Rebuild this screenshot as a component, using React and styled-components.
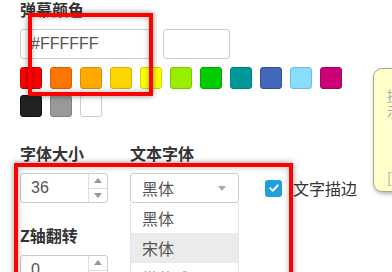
import styled, { createGlobalStyle } from "styled-components";

const Global = createGlobalStyle`
  body {
    margin: 0;
    background: #fff;
  }
`;

const colors = [
  ["#ff0000", "#cc0000"],
  ["#ff7700", "#d96000"],
  ["#ffaa00", "#d99000"],
  ["#ffd500", "#d9b400"],
  ["#ffff00", "#d6d600"],
  ["#99ee00", "#7fc600"],
  ["#00cc00", "#00a800"],
  ["#009999", "#007f7f"],
  ["#4466bb", "#35529c"],
  ["#88ddff", "#6cc0e6"],
  ["#cc0077", "#a80062"],
  ["#222222", "#111111"],
  ["#999999", "#808080"],
  ["#ffffff", "#cccccc"],
];

export default function App() {
  return (
    <Page>
      <Global />
      <Title>弹幕颜色</Title>
      <InputRow>
        <TextInput $width={130} defaultValue="#FFFFFF" />
        <TextInput $width={67} />
      </InputRow>
      <Swatches>
        {colors.map(([fill, edge]) => (
          <Swatch key={fill} $fill={fill} $edge={edge} />
        ))}
      </Swatches>

      <Settings>
        <Column $width={110}>
          <Label>字体大小</Label>
          <NumberBox value="36" />
          <Label $top={23}>Z轴翻转</Label>
          <NumberBox value="0" />
        </Column>
        <Column $width={135}>
          <Label>文本字体</Label>
          <SelectWrap>
            <Select>
              黑体
              <Caret />
            </Select>
            <Options>
              <Option>黑体</Option>
              <Option $active>宋体</Option>
              <Option>微软雅黑</Option>
            </Options>
          </SelectWrap>
        </Column>
        <Column>
          <CheckRow>
            <Check>
              <svg width="12" height="12" viewBox="0 0 12 12">
                <path
                  d="M2.2 6.3 L4.8 8.7 L9.8 3.4"
                  fill="none"
                  stroke="#fff"
                  strokeWidth="2"
                  strokeLinecap="round"
                  strokeLinejoin="round"
                />
              </svg>
            </Check>
            文字描边
          </CheckRow>
        </Column>
      </Settings>

      <Note>
        <NoteLine>提</NoteLine>
        <NoteLine>示</NoteLine>
        <NoteLine $top={50}>[</NoteLine>
      </Note>
      <Mark $left={28} $top={13} $width={125} $height={83} />
      <Mark $left={14} $top={163} $width={279} $height={130} />
    </Page>
  );
}

function NumberBox({ value }) {
  return (
    <Spin>
      <SpinValue>{value}</SpinValue>
      <SpinButtons>
        <SpinArrow $up />
        <SpinArrow />
      </SpinButtons>
    </Spin>
  );
}

const Page = styled.div`
  position: relative;
  width: 392px;
  height: 272px;
  overflow: hidden;
  box-sizing: border-box;
  padding-left: 20px;
  font-family: "Noto Sans CJK SC", sans-serif;
  color: #333;
`;

const Title = styled.div`
  font-size: 16px;
  font-weight: bold;
  line-height: 18px;
`;

const InputRow = styled.div`
  display: flex;
  gap: 13px;
  margin-top: 11px;
`;

const TextInput = styled.input`
  width: ${({ $width }) => $width}px;
  height: 30px;
  box-sizing: border-box;
  border: 1px solid #ccc;
  border-radius: 3px;
  padding: 0 10px;
  font-family: "Liberation Sans", sans-serif;
  font-size: 16px;
  color: #555;
  outline: none;
`;

const Swatches = styled.div`
  display: flex;
  flex-wrap: wrap;
  gap: 6px 8px;
  width: 330px;
  margin-top: 8px;
`;

const Swatch = styled.div`
  width: 22px;
  height: 22px;
  box-sizing: border-box;
  border-radius: 3px;
  background: ${({ $fill }) => $fill};
  border: 1px solid ${({ $edge }) => $edge};
`;

const Settings = styled.div`
  display: flex;
  margin-top: 27px;
`;

const Column = styled.div`
  display: flex;
  flex-direction: column;
  width: ${({ $width }) => ($width ? `${$width}px` : "auto")};
`;

const Label = styled.div`
  font-size: 16px;
  font-weight: bold;
  line-height: 18px;
  margin-top: ${({ $top }) => $top || 0}px;
  margin-bottom: 11px;
`;

const Spin = styled.div`
  display: flex;
  width: 88px;
  height: 30px;
  box-sizing: border-box;
  border: 1px solid #ccc;
  border-radius: 3px;
`;

const SpinValue = styled.div`
  flex: 1;
  padding-left: 10px;
  font-family: "Liberation Sans", sans-serif;
  font-size: 16px;
  line-height: 28px;
  color: #555;
`;

const SpinButtons = styled.div`
  width: 18px;
  display: flex;
  flex-direction: column;
  border-left: 1px solid #ddd;
`;

const SpinArrow = styled.div`
  flex: 1;
  display: flex;
  align-items: center;
  justify-content: center;
  & + & {
    border-top: 1px solid #ddd;
  }
  &::before {
    content: "";
    border-left: 4px solid transparent;
    border-right: 4px solid transparent;
    ${({ $up }) =>
      $up ? "border-bottom: 5px solid #999;" : "border-top: 5px solid #999;"}
  }
`;

const SelectWrap = styled.div`
  position: relative;
  width: 109px;
`;

const Select = styled.div`
  display: flex;
  align-items: center;
  height: 30px;
  box-sizing: border-box;
  border: 1px solid #ccc;
  border-radius: 3px;
  padding-left: 11px;
  font-size: 16px;
  color: #555;
`;

const Caret = styled.span`
  margin-left: auto;
  margin-right: 12px;
  border-left: 4px solid transparent;
  border-right: 4px solid transparent;
  border-top: 5px solid #aaa;
`;

const Options = styled.div`
  position: absolute;
  top: 30px;
  left: 0;
  right: 0;
  background: #fff;
  border-left: 1px solid #e4e4e4;
  border-right: 1px solid #e4e4e4;
`;

const Option = styled.div`
  height: 30px;
  padding-left: 11px;
  font-size: 16px;
  line-height: 30px;
  color: #555;
  background: ${({ $active }) => ($active ? "#ebebeb" : "#fff")};
`;

const CheckRow = styled.div`
  display: flex;
  align-items: center;
  gap: 11px;
  height: 30px;
  margin-top: 29px;
  font-size: 16px;
  color: #333;
`;

const Check = styled.span`
  display: flex;
  align-items: center;
  justify-content: center;
  width: 17px;
  height: 17px;
  border-radius: 3px;
  background: #1fa0dd;
`;

const Note = styled.div`
  position: absolute;
  left: 373px;
  top: 68px;
  width: 80px;
  height: 124px;
  box-sizing: border-box;
  padding: 18px 0 0 13px;
  display: flex;
  flex-direction: column;
  background: #ffffcc;
  border: 1px solid #a8a8a0;
  border-radius: 9px;
  box-shadow: 1px 2px 4px rgba(0, 0, 0, 0.3);
`;

const NoteLine = styled.div`
  margin-top: ${({ $top }) => $top || 0}px;
  font-size: 14px;
  line-height: 16px;
  color: #aaa;
  white-space: nowrap;
`;

const Mark = styled.div`
  position: absolute;
  left: ${({ $left }) => $left}px;
  top: ${({ $top }) => $top}px;
  width: ${({ $width }) => $width}px;
  height: ${({ $height }) => $height}px;
  box-sizing: border-box;
  border: 4px solid #ff0000;
  box-shadow: 0 0 6px rgba(0, 0, 0, 0.45), inset 0 0 6px rgba(0, 0, 0, 0.3);
  pointer-events: none;
`;
